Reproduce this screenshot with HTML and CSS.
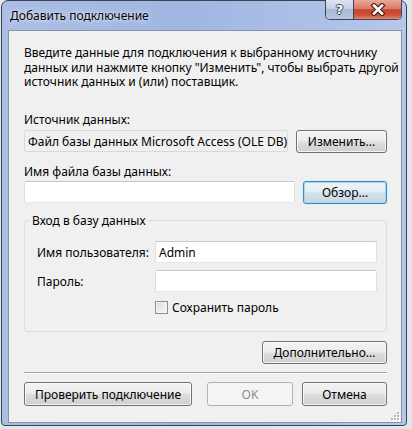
FILE: index.html
```html
<!DOCTYPE html>
<html lang="ru">
<head>
<meta charset="utf-8">
<title>Добавить подключение</title>
<link rel="stylesheet" href="styles.css">
</head>
<body>
<div class="window">
  <div class="titlebar">
    <span class="title">Добавить подключение</span>
    <div class="caption">
      <span class="cap help">?</span>
      <span class="cap close">
        <svg width="16" height="13" viewBox="0 0 16 13">
          <path d="M4 2.5 L12 10.5 M12 2.5 L4 10.5" stroke="#4a2620" stroke-width="5" stroke-linecap="square" fill="none"/>
          <path d="M4 2.5 L12 10.5 M12 2.5 L4 10.5" stroke="#ffffff" stroke-width="2.6" stroke-linecap="square" fill="none"/>
        </svg>
      </span>
    </div>
  </div>
  <div class="client">
    <div class="intro">
      <div class="intro-line">Введите данные для подключения к выбранному источнику</div>
      <div class="intro-line">данных или нажмите кнопку "Изменить", чтобы выбрать другой</div>
      <div class="intro-line">источник данных и (или) поставщик.</div>
    </div>
    <div class="label label-source">Источник данных:</div>
    <div class="row row-source">
      <div class="field readonly source-field">Файл базы данных Microsoft Access (OLE DB)</div>
      <button class="btn btn-change">Изменить...</button>
    </div>
    <div class="label label-file">Имя файла базы данных:</div>
    <div class="row row-file">
      <div class="field input file-field"></div>
      <button class="btn default btn-browse">Обзор...</button>
    </div>
    <fieldset class="group">
      <legend>Вход в базу данных</legend>
      <div class="group-body">
        <span class="glabel">Имя пользователя:</span>
        <div class="field input">Admin</div>
        <span class="glabel">Пароль:</span>
        <div class="field input"></div>
        <span class="spacer"></span>
        <label class="check"><span class="box"></span>Сохранить пароль</label>
      </div>
    </fieldset>
    <div class="adv-row"><button class="btn btn-adv">Дополнительно...</button></div>
    <div class="sep"></div>
    <div class="footer">
      <button class="btn btn-test">Проверить подключение</button>
      <button class="btn disabled btn-ok">OK</button>
      <button class="btn btn-cancel">Отмена</button>
    </div>
    <svg class="grip" width="10" height="10" viewBox="0 0 10 10">
      <g fill="#ffffff">
        <rect x="8" y="2" width="2" height="2"/><rect x="5" y="5" width="2" height="2"/><rect x="8" y="5" width="2" height="2"/>
        <rect x="2" y="8" width="2" height="2"/><rect x="5" y="8" width="2" height="2"/><rect x="8" y="8" width="2" height="2"/>
      </g>
      <g fill="#b8b8b8">
        <rect x="7" y="1" width="2" height="2"/><rect x="4" y="4" width="2" height="2"/><rect x="7" y="4" width="2" height="2"/>
        <rect x="1" y="7" width="2" height="2"/><rect x="4" y="7" width="2" height="2"/><rect x="7" y="7" width="2" height="2"/>
      </g>
    </svg>
  </div>
</div>
</body>
</html>
```
FILE: styles.css
```css
* { box-sizing: border-box; }
html, body { margin: 0; padding: 0; }
body {
  width: 412px;
  height: 429px;
  overflow: hidden;
  background: #e2e5ea;
  font-family: "Noto Sans", "Open Sans", sans-serif;
  font-size: 12px;
  color: #000;
}
.window {
  margin-left: 1px;
  width: 406px;
  height: 426px;
  border: 1px solid #3b4250;
  border-radius: 7px 7px 4px 4px;
  background: linear-gradient(90deg, #abbee4 0%, #a0b6e2 45%, #b5c7eb 100%);
  display: flex;
  flex-direction: column;
}
.titlebar {
  height: 29px;
  display: flex;
  align-items: flex-start;
  padding-left: 8px;
}
.title {
  margin-top: 7px;
  line-height: 15px;
  text-shadow: 0 0 6px rgba(255,255,255,0.85), 0 0 2px rgba(255,255,255,0.6);
}
.caption {
  margin-left: auto;
  margin-right: 4px;
  margin-top: -1px;
  display: flex;
  height: 20px;
  border: 1px solid #3f4654;
  border-top: none;
  border-radius: 0 0 5px 5px;
  overflow: hidden;
}
.cap {
  display: flex;
  align-items: center;
  justify-content: center;
  height: 19px;
}
.help {
  width: 28px;
  border-right: 1px solid #3f4654;
  background: linear-gradient(#dce4f1 0%, #c5d1e6 45%, #a9b9d5 50%, #b6c5df 100%);
  color: #fff;
  font-family: "DejaVu Sans", sans-serif;
  font-weight: bold;
  font-size: 13px;
  text-shadow: -1px 0 #3a4458, 1px 0 #3a4458, 0 -1px #3a4458, 0 1px #3a4458;
}
.close {
  width: 47px;
  background: linear-gradient(#eba99a 0%, #db7a63 45%, #c8432a 52%, #cf5238 80%, #e08c75 100%);
}
.client {
  position: relative;
  margin: 0 4px 2px 6px;
  flex: 1;
  background: #f0f0f0;
  border: 1px solid #8794aa;
  padding: 15px 14px 0 15px;
  display: flex;
  flex-direction: column;
}
.intro-line {
  height: 14.5px;
  line-height: 14.5px;
  white-space: nowrap;
}
.label { line-height: 15px; }
.label-source { margin-top: 22.5px; }
.label-file { margin-top: 11px; }
.row {
  display: flex;
  justify-content: space-between;
  align-items: flex-start;
}
.row-source { margin-top: 3px; }
.row-file { margin-top: 2px; }
.field {
  height: 22px;
  border-radius: 2px;
  padding: 0 3px;
  display: flex;
  align-items: center;
  white-space: nowrap;
}
.readonly {
  background: #f0f0f0;
  border: 1px solid #d9d9d9;
}
.input {
  background: #fff;
  border: 1px solid;
  border-color: #c5c8ce #dcdfe5 #e3e7ec #dcdfe5;
}
.source-field { width: 264px; }
.file-field { width: 271px; }
.btn {
  font-family: inherit;
  font-size: 12px;
  color: #000;
  height: 23px;
  padding: 0;
  border: 1px solid #707070;
  border-radius: 3px;
  background: linear-gradient(#f3f3f3 0%, #ebebeb 48%, #dddddd 52%, #cfcfcf 100%);
  box-shadow: inset 0 0 0 1px rgba(255,255,255,0.75);
}
.default {
  border-color: #3c8dbf;
  background: linear-gradient(#eef5f9 0%, #e3ecf2 48%, #d3e1ea 52%, #c7d9e5 100%);
  box-shadow: inset 0 0 0 1px #9fd8f2, 0 0 1px rgba(60,141,191,0.6);
}
.disabled {
  border-color: #adb2b5;
  background: #f4f4f4;
  color: #8d8d8d;
  box-shadow: none;
}
.btn-change { width: 91px; }
.btn-browse { width: 84px; }
.group {
  margin: 9px 0 0 0;
  padding: 0;
  min-width: 0;
  border: 1px solid #d5dfe5;
  border-radius: 3px;
}
.group legend {
  margin-left: 5px;
  padding: 0 2px;
  line-height: 15px;
}
.group-body {
  display: grid;
  grid-template-columns: 118px 222px;
  row-gap: 7px;
  align-items: center;
  padding: 13px 10px 16px 12px;
}
.glabel { line-height: 15px; }
.check {
  margin-top: 1px;
  display: flex;
  align-items: center;
  gap: 4px;
  line-height: 15px;
}
.box {
  width: 13px;
  height: 13px;
  border: 1px solid #8e8f8f;
  background: linear-gradient(135deg, #d8d8d8 0%, #eeeeee 60%, #f8f8f8 100%);
  box-shadow: inset 0 0 0 1px #f4f4f4;
}
.adv-row {
  margin-top: 9px;
  display: flex;
  justify-content: flex-end;
}
.btn-adv { width: 125px; }
.sep {
  margin-top: 8px;
  height: 2px;
  border-top: 1px solid #a0a0a0;
  border-bottom: 1px solid #ffffff;
}
.footer {
  margin-top: 8px;
  display: flex;
}
.footer .btn { height: 24px; }
.btn-test { width: 168px; }
.btn-ok { width: 86px; margin-left: auto; }
.btn-cancel { width: 85px; margin-left: 9px; }
.grip {
  position: absolute;
  right: 1px;
  bottom: 1px;
}
```
